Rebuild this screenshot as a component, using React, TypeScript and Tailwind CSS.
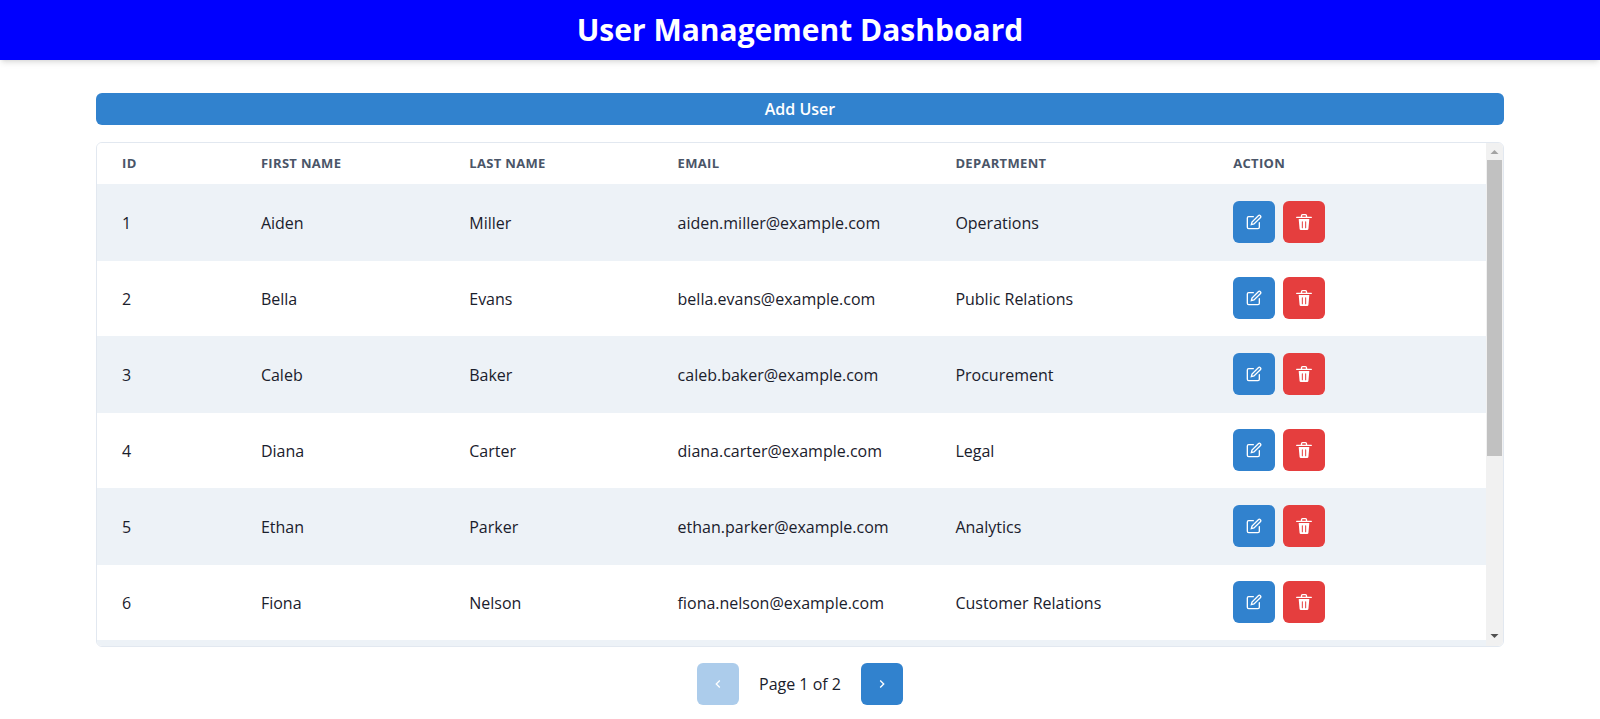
import { useRef, useState } from 'react';

type User = {
  id: number;
  firstName: string;
  lastName: string;
  email: string;
  department: string;
};

const USERS: User[] = [
  { id: 1, firstName: 'Aiden', lastName: 'Miller', email: 'aiden.miller@example.com', department: 'Operations' },
  { id: 2, firstName: 'Bella', lastName: 'Evans', email: 'bella.evans@example.com', department: 'Public Relations' },
  { id: 3, firstName: 'Caleb', lastName: 'Baker', email: 'caleb.baker@example.com', department: 'Procurement' },
  { id: 4, firstName: 'Diana', lastName: 'Carter', email: 'diana.carter@example.com', department: 'Legal' },
  { id: 5, firstName: 'Ethan', lastName: 'Parker', email: 'ethan.parker@example.com', department: 'Analytics' },
  { id: 6, firstName: 'Fiona', lastName: 'Nelson', email: 'fiona.nelson@example.com', department: 'Customer Relations' },
  { id: 7, firstName: 'Gavin', lastName: 'Reed', email: 'gavin.reed@example.com', department: 'Finance' },
  { id: 8, firstName: 'Hannah', lastName: 'Scott', email: 'hannah.scott@example.com', department: 'Marketing' },
  { id: 9, firstName: 'Isaac', lastName: 'Turner', email: 'isaac.turner@example.com', department: 'Engineering' },
  { id: 10, firstName: 'Julia', lastName: 'Ward', email: 'julia.ward@example.com', department: 'Support' },
];

const COLUMNS = [
  { label: 'ID', width: 'w-[10%]' },
  { label: 'First Name', width: 'w-[15%]' },
  { label: 'Last Name', width: 'w-[15%]' },
  { label: 'Email', width: 'w-[20%]' },
  { label: 'Department', width: 'w-[20%]' },
  { label: 'Action', width: 'w-[20%]' },
];

const THUMB_PERCENT = 63;

function EditIcon() {
  return (
    <svg viewBox="0 0 24 24" className="size-4" fill="none" stroke="currentColor" strokeWidth="2" strokeLinecap="round" aria-hidden="true">
      <path d="M11 4H4a2 2 0 0 0-2 2v14a2 2 0 0 0 2 2h14a2 2 0 0 0 2-2v-7" />
      <path d="M18.5 2.5a2.121 2.121 0 0 1 3 3L12 15l-4 1 1-4 9.5-9.5z" />
    </svg>
  );
}

function DeleteIcon() {
  return (
    <svg viewBox="0 0 24 24" className="size-4" fill="currentColor" aria-hidden="true">
      <path d="M19.452 7.5H4.547a.5.5 0 00-.5.545l1.287 14.136A2 2 0 007.326 24h9.347a2 2 0 001.992-1.819L19.95 8.046a.5.5 0 00-.129-.382.5.5 0 00-.369-.164zm-9.2 13a.75.75 0 01-1.5 0v-9a.75.75 0 011.5 0zm5 0a.75.75 0 01-1.5 0v-9a.75.75 0 011.5 0zM23 4h-6a.25.25 0 01-.25-.25V2.5A2.5 2.5 0 0014.25 0h-4.5a2.5 2.5 0 00-2.5 2.5v1.25A.25.25 0 017 4H1a1 1 0 000 2h22a1 1 0 000-2zM9.25 3.75V2.5a.5.5 0 01.5-.5h4.5a.5.5 0 01.5.5v1.25a.25.25 0 01-.25.25h-5a.25.25 0 01-.25-.25z" />
    </svg>
  );
}

function Chevron({ direction }: { direction: 'left' | 'right' }) {
  return (
    <svg viewBox="0 0 24 24" className="size-4" fill="currentColor" aria-hidden="true">
      <path
        d={
          direction === 'left'
            ? 'M15.41 7.41L14 6l-6 6 6 6 1.41-1.41L10.83 12z'
            : 'M10 6L8.59 7.41 13.17 12l-4.58 4.59L10 18l6-6z'
        }
      />
    </svg>
  );
}

const iconButton = 'flex size-[42px] items-center justify-center rounded-md text-white';

export default function App() {
  const scroller = useRef<HTMLDivElement>(null);
  const [progress, setProgress] = useState(0);
  const [page, setPage] = useState(1);

  const handleScroll = () => {
    const el = scroller.current;
    if (el) setProgress(el.scrollTop / Math.max(1, el.scrollHeight - el.clientHeight));
  };

  return (
    <div className="min-h-screen bg-white font-['Segoe_UI','Open_Sans',sans-serif] text-base text-[#1a202c]">
      <header className="flex h-[60px] items-center justify-center bg-[#0000ff] shadow-md">
        <h1 className="text-3xl font-bold text-white">User Management Dashboard</h1>
      </header>

      <main className="flex flex-col px-[6%] pt-[33px]">
        <button type="button" className="h-8 rounded-md bg-[#3182ce] font-semibold text-white">
          Add User
        </button>

        <div className="mt-[17px] flex overflow-hidden rounded-md border border-[#e2e8f0]">
          <div
            ref={scroller}
            onScroll={handleScroll}
            className="h-[70vh] min-w-0 flex-1 overflow-y-auto [scrollbar-width:none]"
          >
            <table className="w-full table-fixed border-separate border-spacing-0">
              <thead>
                <tr>
                  {COLUMNS.map((column) => (
                    <th
                      key={column.label}
                      scope="col"
                      className={`${column.width} sticky top-0 h-[42px] border-b border-[#edf2f7] bg-white px-[25px] text-left text-[13px] font-bold tracking-wide text-[#4a5568] uppercase`}
                    >
                      {column.label}
                    </th>
                  ))}
                </tr>
              </thead>
              <tbody>
                {USERS.map((user) => (
                  <tr key={user.id} className="odd:bg-[#edf2f7] [&>td]:h-[76px] [&>td]:border-b [&>td]:border-[#edf2f7] [&>td]:px-[25px]">
                    <td>{user.id}</td>
                    <td>{user.firstName}</td>
                    <td>{user.lastName}</td>
                    <td>{user.email}</td>
                    <td>{user.department}</td>
                    <td className="pt-4 align-top">
                      <div className="flex gap-2">
                        <button type="button" aria-label="Edit user" className={`${iconButton} bg-[#3182ce]`}>
                          <EditIcon />
                        </button>
                        <button type="button" aria-label="Delete user" className={`${iconButton} bg-[#e53e3e]`}>
                          <DeleteIcon />
                        </button>
                      </div>
                    </td>
                  </tr>
                ))}
              </tbody>
            </table>
          </div>

          <div className="flex w-[17px] flex-col bg-[#f1f1f1]" aria-hidden="true">
            <svg viewBox="0 0 17 17" className="size-[17px]" fill="#a3a3a3">
              <path d="M4.500 11L8.500 7l4 4z" />
            </svg>
            <div className="flex flex-1 flex-col px-px">
              <div style={{ height: `${(100 - THUMB_PERCENT) * progress}%` }} />
              <div className="bg-[#c1c1c1]" style={{ height: `${THUMB_PERCENT}%` }} />
            </div>
            <svg viewBox="0 0 17 17" className="size-[17px]" fill="#505050">
              <path d="M4.500 5L8.500 9l4-4z" />
            </svg>
          </div>
        </div>

        <nav aria-label="Pagination" className="mt-4 flex items-center justify-center gap-5">
          <button
            type="button"
            aria-label="Previous page"
            disabled={page === 1}
            onClick={() => setPage(1)}
            className={`${iconButton} bg-[#3182ce] disabled:opacity-40`}
          >
            <Chevron direction="left" />
          </button>
          <span>Page {page} of 2</span>
          <button
            type="button"
            aria-label="Next page"
            disabled={page === 2}
            onClick={() => setPage(2)}
            className={`${iconButton} bg-[#3182ce] disabled:opacity-40`}
          >
            <Chevron direction="right" />
          </button>
        </nav>
      </main>
    </div>
  );
}
